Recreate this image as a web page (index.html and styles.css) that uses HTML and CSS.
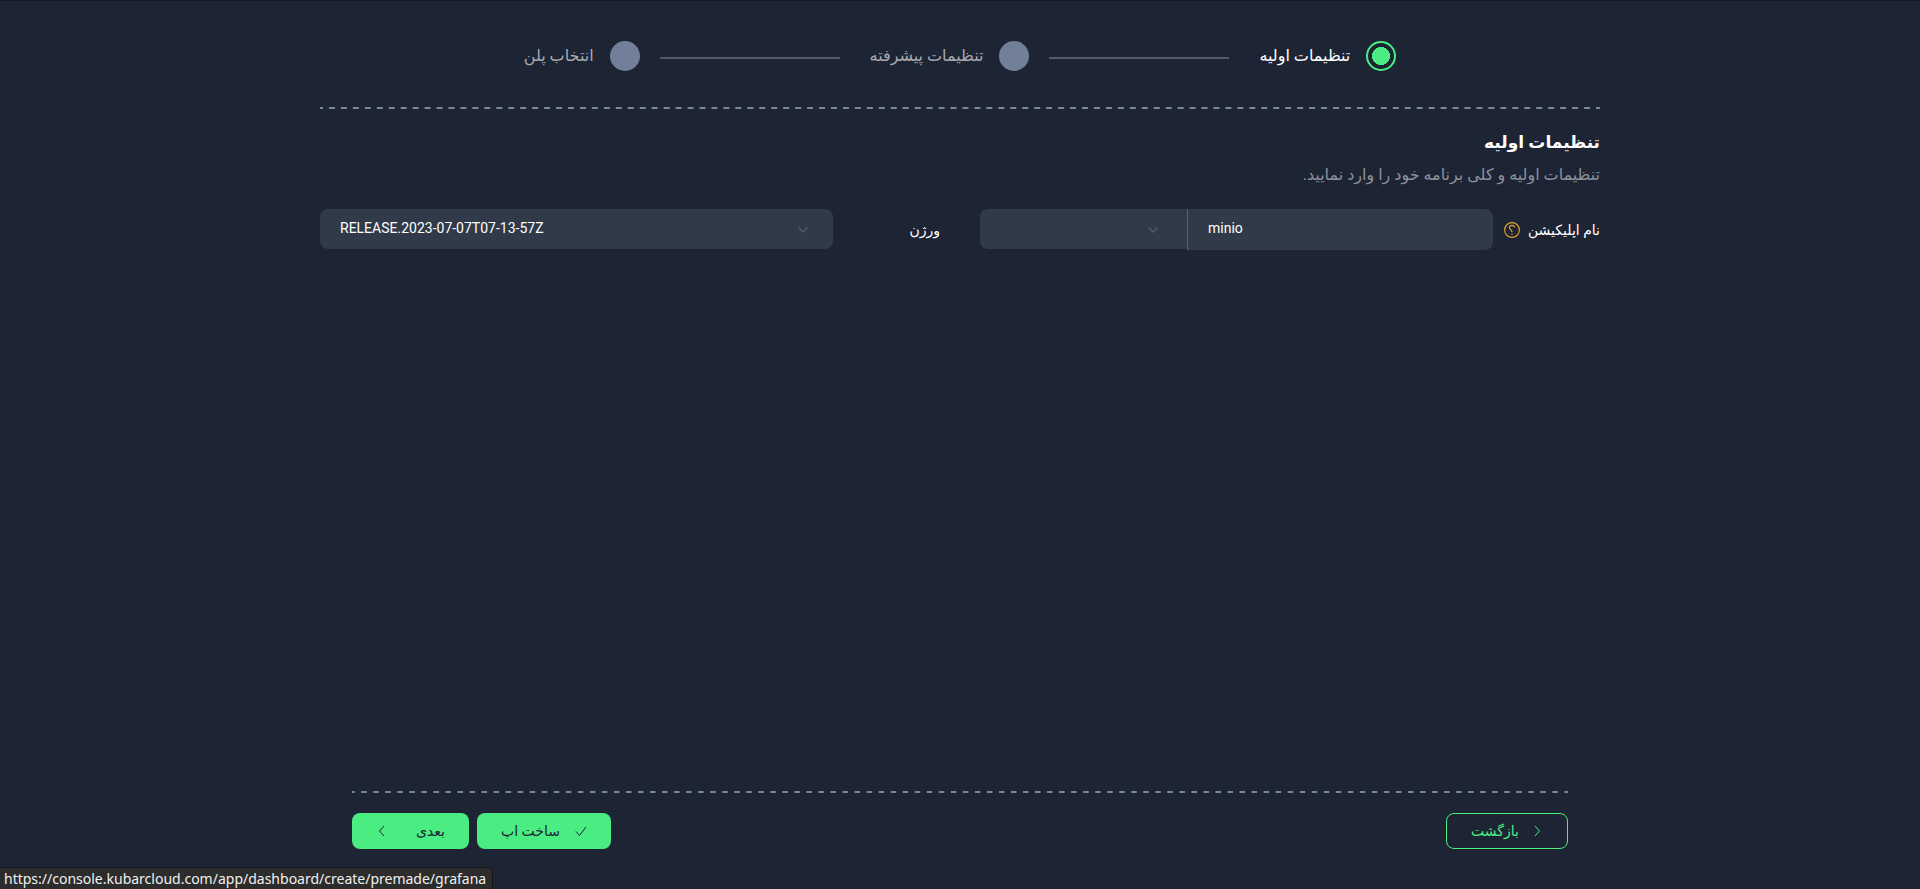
FILE: index.html
```html
<!DOCTYPE html>
<html lang="fa" dir="rtl">
<head>
<meta charset="utf-8">
<meta name="viewport" content="width=device-width, initial-scale=1">
<title>تنظیمات اولیه</title>
<link rel="stylesheet" href="styles.css">
</head>
<body>
<div class="page">
  <header class="container head">
    <ol class="steps">
      <li class="step step-active"><span class="dot"></span><span>تنظیمات اولیه</span></li>
      <li class="step"><span class="dot"></span><span>تنظیمات پیشرفته</span></li>
      <li class="step"><span class="dot"></span><span>انتخاب پلن</span></li>
    </ol>
    <div class="dashes"></div>
  </header>

  <main class="container main">
    <h1 class="title">تنظیمات اولیه</h1>
    <p class="subtitle">تنظیمات اولیه و کلی برنامه خود را وارد نمایید.</p>
    <form class="fields">
      <div class="field">
        <div class="label">
          <label for="app-name">نام اپلیکیشن</label>
          <svg class="help" viewBox="0 0 16 16" fill="none" stroke="currentColor" aria-hidden="true">
            <circle cx="8" cy="8" r="7.4" stroke-width="1.2"/>
            <path d="M10.600 5.400C10.300 4 9.300 3.400 8 3.400S5.400 4.300 5.400 5.700C5.400 7.500 8 7.500 8 10" stroke-width="1.2"/>
            <path d="M8 11.300v1.400" stroke-width="1.2"/>
          </svg>
        </div>
        <div class="group">
          <input class="control name" id="app-name" type="text" value="minio" dir="ltr">
          <div class="select domain">
            <select class="control" aria-label="دامنه" dir="ltr"><option></option></select>
            <svg class="chevron" viewBox="0 0 12 8" aria-hidden="true"><path d="M1.500 1.500 6 6l4.500-4.500"/></svg>
          </div>
        </div>
      </div>
      <div class="field">
        <div class="label"><label for="version">ورژن</label></div>
        <div class="select">
          <select class="control" id="version" dir="ltr"><option>RELEASE.2023-07-07T07-13-57Z</option></select>
          <svg class="chevron" viewBox="0 0 12 8" aria-hidden="true"><path d="M1.500 1.500 6 6l4.500-4.500"/></svg>
        </div>
      </div>
    </form>
  </main>

  <footer class="container foot">
    <div class="dashes dashes-foot"></div>
    <div class="actions">
      <button class="btn btn-back" type="button">
        <svg class="icon" viewBox="0 0 12 12" aria-hidden="true"><path d="M4 1l4.500 5L4 11"/></svg>
        <span>بازگشت</span>
      </button>
      <div class="actions-end">
        <button class="btn btn-create" type="button">
          <svg class="icon" viewBox="0 0 12 12" aria-hidden="true"><path d="M1 6.500 4.500 10.500 11 2"/></svg>
          <span>ساخت اپ</span>
        </button>
        <button class="btn btn-next" type="button">
          <span>بعدی</span>
          <svg class="icon" viewBox="0 0 12 12" aria-hidden="true"><path d="M8 1 3.500 6 8 11"/></svg>
        </button>
      </div>
    </div>
  </footer>
</div>
<div class="status" dir="ltr">https://console.kubarcloud.com/app/dashboard/create/premade/grafana</div>
</body>
</html>
```
FILE: styles.css
```css
* { box-sizing: border-box; }

body {
  margin: 0;
  background: #1d2433;
  color: #fff;
  font-family: Roboto, "DejaVu Sans", sans-serif;
  font-size: 16px;
  line-height: 24px;
}

.page {
  min-height: 100vh;
  display: flex;
  flex-direction: column;
  border-top: 1px solid #141a24;
}

.container {
  width: 100%;
  max-width: 1280px;
  margin: 0 auto;
}

.head { padding-top: 40px; }

.steps {
  list-style: none;
  margin: 0 0 36px;
  padding: 0;
  display: flex;
  justify-content: center;
}

.step {
  display: flex;
  align-items: center;
  gap: 16px;
  color: #a9abb0;
}

.step + .step::before {
  content: "";
  width: 180px;
  height: 2px;
  margin: 4px 30px 0 4px;
  background: #535969;
}

.step-active { color: #fff; }

.dot {
  width: 30px;
  height: 30px;
  border-radius: 50%;
  background: #717f99;
}

.step-active .dot {
  border: 2px solid #4aed82;
  background: radial-gradient(circle, #4aed82 9px, transparent 9px);
}

.dashes {
  height: 2px;
  background: linear-gradient(90deg, #7b8797 3px, transparent 3px 9px, #7b8797 9px) 0 0 / 12px 2px round;
}

.dashes-foot {
  background-image: linear-gradient(90deg, #7684a0 3px, transparent 3px 9px, #7684a0 9px);
}

.main {
  flex: 1;
  padding-top: 20px;
}

.title {
  margin: 0;
  font-size: 17px;
  line-height: 26px;
}

.subtitle {
  margin: 8px 0 22px;
  color: #8c919c;
}

.fields {
  display: grid;
  grid-template-columns: 1fr 1fr;
  gap: 40px;
}

.field {
  display: grid;
  grid-template-columns: 107px 1fr;
  align-items: start;
}

.label {
  display: flex;
  align-items: center;
  gap: 8px;
  height: 42px;
  font-size: 14px;
  white-space: nowrap;
}

.help {
  width: 16px;
  height: 16px;
  color: #d9a02c;
}

.group { display: flex; }

.control {
  width: 100%;
  height: 40px;
  padding: 0 20px 2px;
  border: 0;
  border-radius: 8px;
  appearance: none;
  background: #313a49;
  color: #fff;
  font: 14px/20px Roboto, sans-serif;
}

.name {
  flex: 1;
  min-width: 0;
  height: 41px;
  padding-bottom: 4px;
  border-left: 1px solid #5b6372;
  border-radius: 0 8px 8px 0;
}

.select { position: relative; }

.domain { width: 207px; }

.domain .control { border-radius: 8px 0 0 8px; }

.chevron {
  position: absolute;
  right: 24px;
  top: 17px;
  width: 12px;
  height: 8px;
  fill: none;
  stroke: #525b69;
  stroke-width: 1.5;
  pointer-events: none;
}

.domain .chevron { right: 28px; }

.foot { padding: 0 32px 40px; }

.actions {
  display: flex;
  justify-content: space-between;
  margin-top: 20px;
}

.actions-end {
  display: flex;
  gap: 8px;
}

.btn {
  display: flex;
  align-items: center;
  justify-content: space-between;
  height: 36px;
  padding: 0 24px;
  border: 0;
  border-radius: 8px;
  background: #4aed82;
  color: #1d2433;
  font: 14px/24px Roboto, "DejaVu Sans", sans-serif;
}

.btn-back {
  width: 122px;
  border: 1px solid #4aed82;
  background: transparent;
  color: #4aed82;
}

.btn-create { width: 134px; }

.btn-next { width: 117px; }

.icon {
  width: 12px;
  height: 12px;
  fill: none;
  stroke: currentColor;
  stroke-width: 1;
}

.status {
  position: fixed;
  left: 0;
  bottom: 0;
  height: 22px;
  padding: 0 6px 0 4px;
  border-top: 1px solid #17181a;
  border-right: 1px solid #17181a;
  border-radius: 0 4px 0 0;
  background: #2c2c2c;
  color: #f0f0f0;
  font: 14px/22px "Noto Sans", sans-serif;
}
```
